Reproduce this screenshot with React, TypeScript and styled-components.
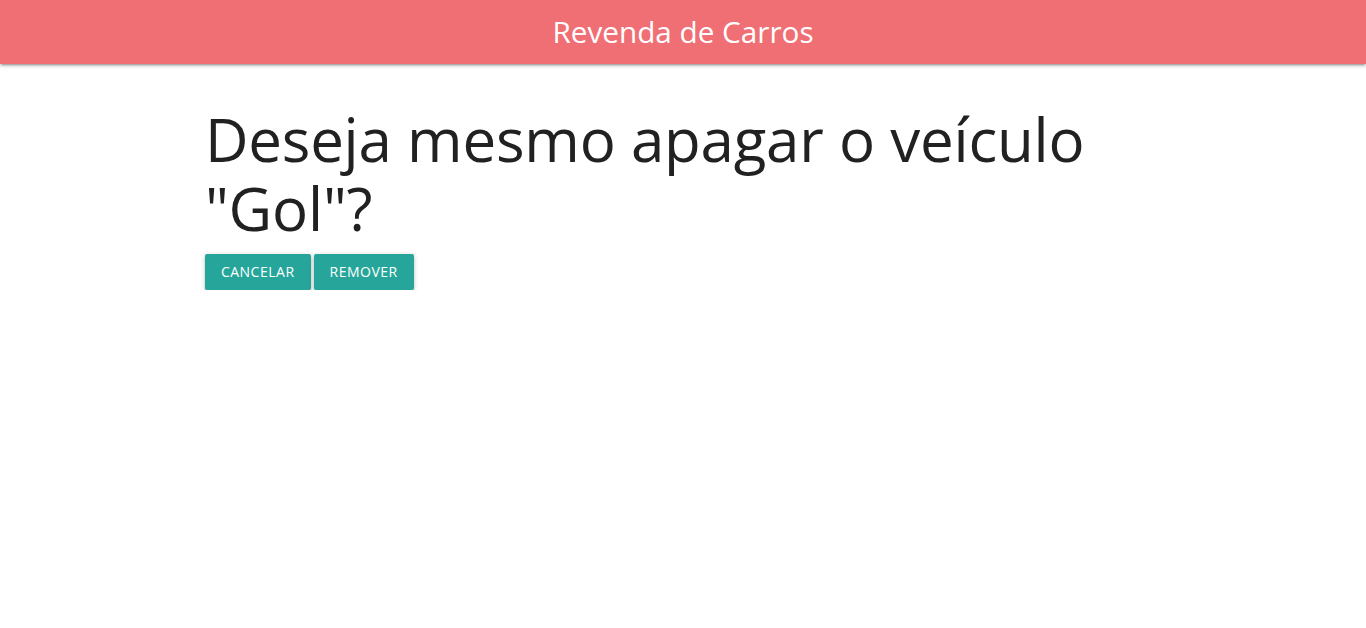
import React from "react";
import styled, { createGlobalStyle } from "styled-components";

const Global = createGlobalStyle`
  html, body { margin: 0; padding: 0; background: #fff; }
  body { font-family: "Open Sans", "Noto Sans", sans-serif; color: rgba(0,0,0,0.87); }
  * { box-sizing: border-box; }
`;

const Nav = styled.nav`
  height: 64px;
  background: #ef6f75;
  display: flex;
  align-items: center;
  justify-content: center;
  box-shadow: 0 2px 2px 0 rgba(0,0,0,0.14), 0 3px 1px -2px rgba(0,0,0,0.12), 0 1px 5px 0 rgba(0,0,0,0.2);
`;

const Brand = styled.a`
  color: #fff;
  font-size: 29.7px;
  line-height: 64px;
  text-decoration: none;
  font-family: "Open Sans", sans-serif;
`;

const Container = styled.main`
  width: 70%;
  margin: 0 auto;
`;

const Title = styled.h1`
  font-size: 60px;
  font-weight: 400;
  letter-spacing: -0.2px;
  line-height: 69.3px;
  margin: 41px 0 10px;
  color: #212121;
`;

const Actions = styled.div`
  display: flex;
  gap: 3px;
`;

const Button = styled.button`
  height: 36px;
  line-height: 36px;
  padding: 0 16px;
  border: none;
  border-radius: 2px;
  background: #26a69a;
  color: #fff;
  font-family: "Open Sans", sans-serif;
  font-size: 14px;
  letter-spacing: 0.5px;
  text-transform: uppercase;
  cursor: pointer;
  box-shadow: 0 2px 2px 0 rgba(0,0,0,0.14), 0 3px 1px -2px rgba(0,0,0,0.12), 0 1px 5px 0 rgba(0,0,0,0.2);
`;

export default function App() {
  return (
    <>
      <Global />
      <Nav>
        <Brand href="#">Revenda de Carros</Brand>
      </Nav>
      <Container>
        <Title>Deseja mesmo apagar o veículo "Gol"?</Title>
        <Actions>
          <Button>Cancelar</Button>
          <Button>Remover</Button>
        </Actions>
      </Container>
    </>
  );
}
